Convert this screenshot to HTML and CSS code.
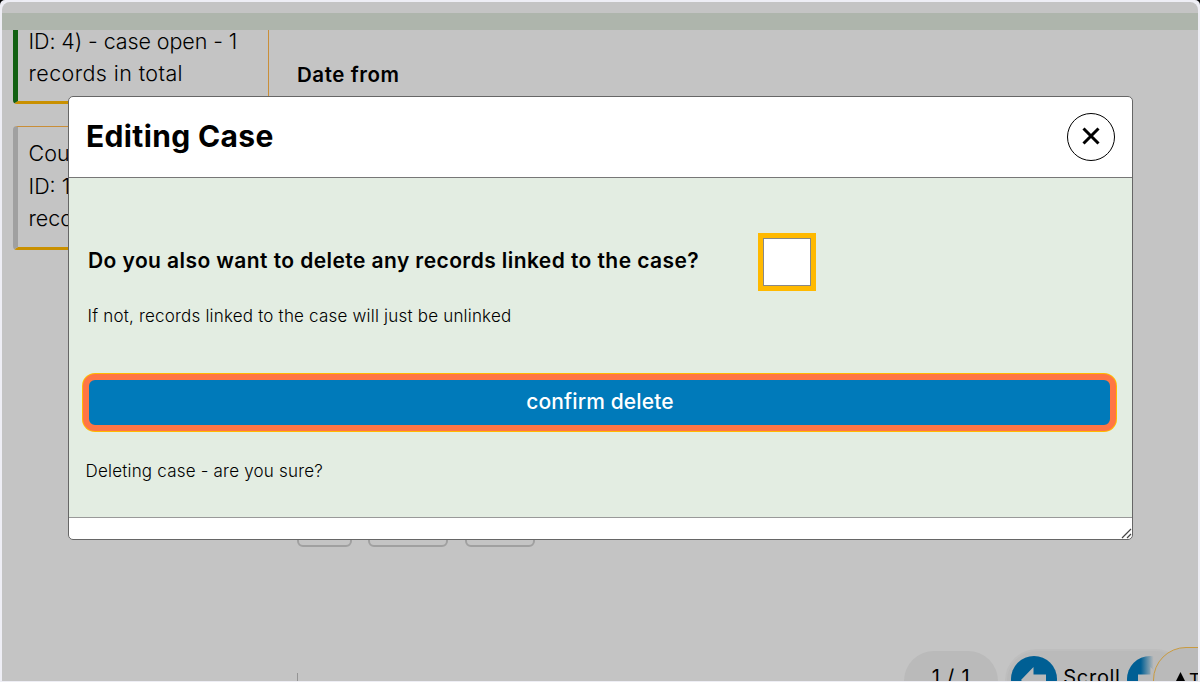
FILE: index.html
```html
<!DOCTYPE html>
<html lang="en">
<head>
<meta charset="utf-8">
<title>Editing Case</title>
<link rel="stylesheet" href="styles.css">
</head>
<body>
<div class="window">
  <div class="band"></div>
  <main class="page">
    <aside class="cases">
      <div class="case case-open"><span class="l1">ID: 4) - case open - 1</span><span class="l2">records in total</span></div>
      <div class="case case-closed"><span>Cou</span><span>ID: 1</span><span>reco</span></div>
    </aside>
    <section class="details">
      <div class="field-label"><span>Date from</span></div>
      <div class="tabs"><i class="tab tab-a"></i><i class="tab tab-b"></i><i class="tab tab-c"></i></div>
      <div class="rule"></div>
    </section>
  </main>
  <div class="pager"><span>1 / 1</span></div>
  <div class="scroller">
    <svg class="arrow" viewBox="0 0 46 46"><circle cx="23" cy="23" r="23" fill="#005f94"/><path d="M10 24 22.500 11v7.500H35v11H22.500V37z" fill="#bababa"/></svg>
    <span class="scroll-text">Scroll</span>
    <svg class="arrow" viewBox="0 0 46 46"><defs><linearGradient id="fade"><stop offset=".3" stop-color="#005f94"/><stop offset=".58" stop-color="#bababa"/></linearGradient></defs><circle cx="23" cy="23" r="23" fill="url(#fade)"/><path d="M36 24 23.500 11v7.500H11v11h12.500V37z" fill="#bababa"/></svg>
  </div>
  <div class="to-top"><svg class="triangle" viewBox="0 0 12 12"><path d="M6 0 12 12H0z"/></svg><span>T</span></div>
  <div class="dialog">
    <header class="dialog-head">
      <h1><span>Editing Case</span></h1>
      <button class="close" aria-label="Close"><svg viewBox="0 0 18 18"><path d="M1.500 1.500l15 15M16.500 1.500l-15 15" stroke="#000" stroke-width="3"/></svg></button>
    </header>
    <div class="dialog-body">
      <div class="question"><label for="linked">Do you also want to delete any records linked to the case?</label><span class="checkbox" id="linked"></span></div>
      <p class="hint"><span>If not, records linked to the case will just be unlinked</span></p>
      <button class="confirm"><span>confirm delete</span></button>
      <p class="warning"><span>Deleting case - are you sure?</span></p>
    </div>
    <footer class="dialog-foot"><svg class="grip" viewBox="0 0 11 11"><path d="M1 10 10 1M6 10l4-4" stroke="#444" stroke-width="1.200" fill="none"/></svg></footer>
  </div>
</div>
</body>
</html>
```
FILE: styles.css
```css
* { box-sizing: border-box; }
html { background: #000; height: 100%; }
body { margin: 0; height: 682px; overflow: hidden; padding: 2px 2px 1px; background: #eeeef5; border-radius: 5px 5px 0 0; font-family: Inter, "Liberation Sans", sans-serif; color: #000; }
span, label { white-space: nowrap; }
.window { position: relative; height: 679px; overflow: hidden; background: #c4c4c4; border-radius: 8px 8px 0 0; padding-top: 11px; }
.band { height: 17px; background: #aeb5ac; }
.page { display: flex; height: 651px; }
.cases { width: 256px; margin-left: 11px; flex: none; }
.case { display: flex; flex-direction: column; border: 1px solid #c98e38; border-bottom: 3px solid #c99000; border-radius: 4px; padding-left: 10.500px; font-size: 21.500px; line-height: 32.500px; font-weight: 350; }
.case-open { height: 74px; border-top: 0; border-left: 5px solid #126012; border-radius: 0 0 4px 4px; }
.l1 { margin-top: -5px; letter-spacing: -.1px; }
.l2 { margin-top: -1px; letter-spacing: .4px; }
.case-closed { height: 124px; margin-top: 22px; border-left: 5px solid #a0a0a0; padding-top: 10px; }
.details { margin-left: 28px; flex: 1; }
.field-label { height: 90px; padding-top: 31px; font-size: 20.500px; line-height: 28px; font-weight: 600; letter-spacing: .55px; }
.tabs { display: flex; gap: 17px; padding-top: 390px; }
.tab { height: 37px; border: 2px solid #a0a0a0; border-radius: 6px; margin-left: -.5px; }
.tab-a { width: 55px; }
.tab-b { width: 80px; }
.tab-c { width: 70px; }
.rule { margin-top: 126px; height: 10px; border-left: 1px solid #949494; }
.pager, .scroller, .to-top { position: absolute; background: #bababa; display: flex; }
.pager { left: 902px; top: 649px; width: 94px; height: 60px; border-radius: 30px; justify-content: center; padding-top: 10px; font-size: 20px; line-height: 32px; letter-spacing: .8px; }
.scroller { left: 1003px; top: 647px; width: 182px; height: 64px; border-radius: 32px; border: 2px solid #bebebe; padding: 5px 4px; align-items: flex-start; }
.arrow { width: 46px; height: 46px; flex: none; }
.scroll-text { width: 70px; text-align: center; font-size: 20px; line-height: 36px; padding-top: 3px; letter-spacing: .7px; }
.to-top { left: 1151px; top: 645px; width: 100px; height: 66px; border: 1px solid #c99b40; border-radius: 33px; padding: 24px 0 0 20px; font-size: 18px; line-height: 18px; gap: 2px; }
.triangle { width: 13px; height: 13px; }
.dialog { position: absolute; left: 66px; top: 94px; width: 1065px; height: 444px; background: #fff; border: 1px solid #666; border-radius: 5px; display: flex; flex-direction: column; overflow: hidden; }
.dialog-head { height: 81px; flex: none; border-bottom: 1px solid #777; display: flex; align-items: center; justify-content: space-between; padding: 0 17px; }
h1 { margin: -2px 0 0; font-size: 30px; line-height: 40px; font-weight: 650; letter-spacing: .35px; }
.close { width: 48px; height: 48px; border: 1.500px solid #000; border-radius: 50%; background: #fff; padding: 0; display: flex; align-items: center; justify-content: center; }
.close svg { width: 18px; height: 18px; margin-top: -2px; }
.dialog-body { height: 340px; flex: none; background: #e3ede2; border-bottom: 1px solid #999; padding: 55px 14px 0 13px; }
.question { display: flex; align-items: center; height: 58px; padding-left: 6px; font-size: 21px; font-weight: 600; letter-spacing: .42px; }
.question label { width: 670px; margin-top: -3px; }
.checkbox { width: 58px; height: 58px; border: 5px solid #ffb900; background: #fff; box-shadow: 0 0 0 1px #888 inset; }
.hint { margin: 13px 0 0 5.500px; font-size: 17px; line-height: 24px; font-weight: 300; letter-spacing: .2px; }
.confirm { display: flex; align-items: center; justify-content: center; width: 1033px; height: 57px; margin: 46px 0 0 1px; border: 6px solid #ff7544; border-radius: 12px; background: #007aba; color: #fff; font: 500 21px Inter, "Liberation Sans", sans-serif; letter-spacing: .15px; padding: 0; box-shadow: 0 0 0 1px #ffb900; }
.confirm span { margin: -3px 0 0 1px; }
.warning { margin: 28px 0 0 3.500px; font-size: 17px; line-height: 24px; font-weight: 300; letter-spacing: .2px; }
.dialog-foot { flex: 1; display: flex; align-items: flex-end; justify-content: flex-end; }
.grip { width: 11px; height: 11px; }
```
